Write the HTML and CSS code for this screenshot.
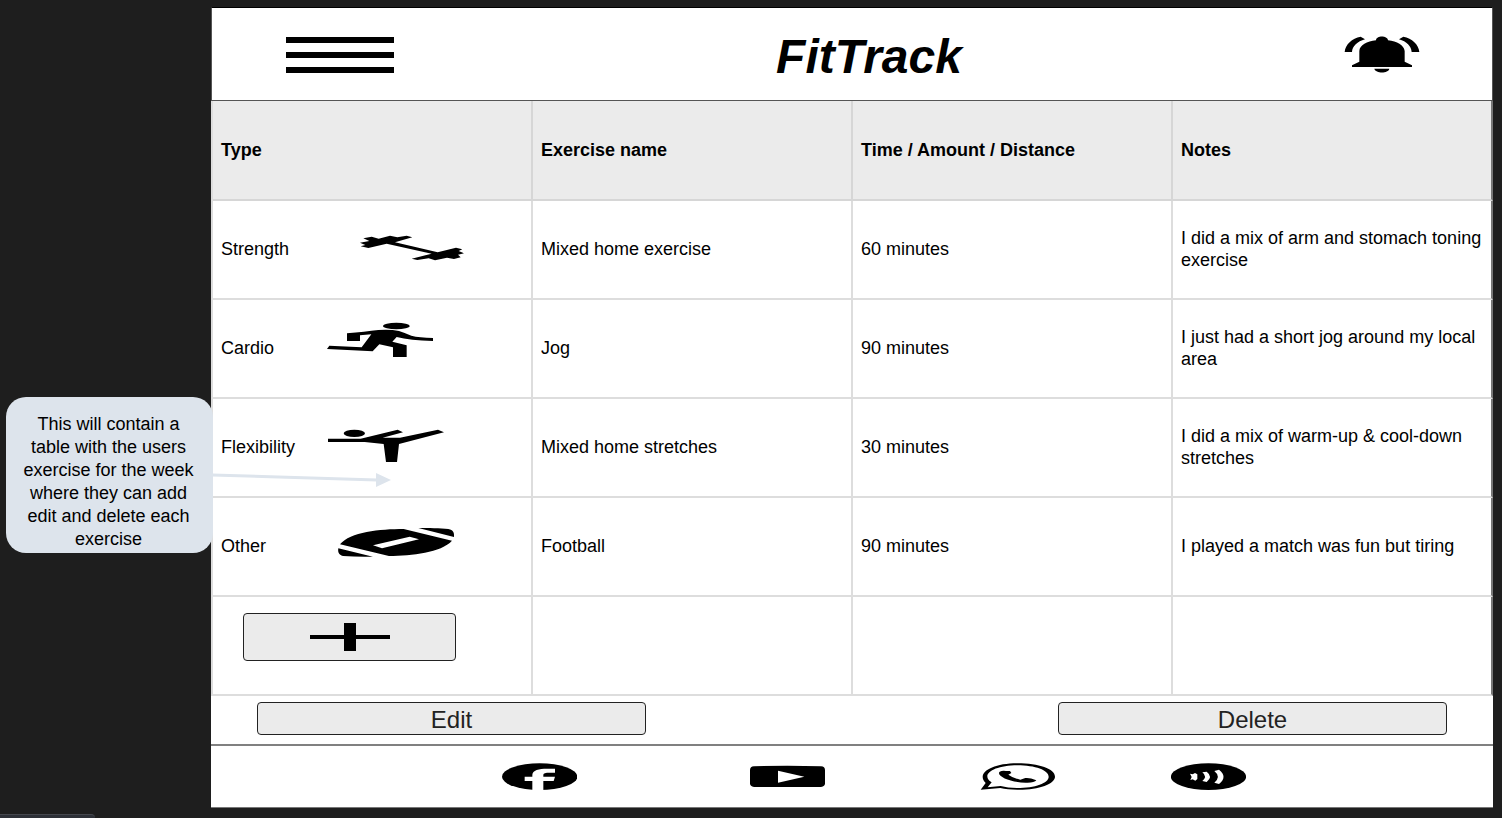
FILE: index.html
```html
<!DOCTYPE html>
<html lang="en">
<head>
<meta charset="utf-8">
<title>FitTrack</title>
<link rel="stylesheet" href="styles.css">
</head>
<body>
<aside class="side">
  <p class="note">This will contain a table with the users exercise for the week where they can add edit and delete each exercise</p>
</aside>
<main class="app">
  <header class="topbar">
    <button class="icon-button" type="button" aria-label="Menu">
      <svg class="menu-icon" viewBox="0 0 108 36"><path d="M0 0h108v6H0zM0 15h108v6H0zM0 30h108v6H0z"/></svg>
    </button>
    <h1 class="brand">FitTrack</h1>
    <button class="icon-button" type="button" aria-label="Notifications">
      <svg class="bell-icon" viewBox="72 108 228 111">
        <path d="M96 201v-5l22-11v-32C119 136 141 124 168 121C169 106 202 106 204 121C231 124 252 136 254 153v32l22 11v5z"/>
        <path d="M163 206h45C205 221 167 221 163 206zM74 156C76 133 96 115 122 110l13 8C112 125 97 138 96 156zM298 156C296 133 276 115 250 110l-13 8C260 125 274 138 275 156z"/>
      </svg>
    </button>
  </header>

  <table class="log">
    <thead>
      <tr><th scope="col">Type</th><th scope="col">Exercise name</th><th scope="col">Time / Amount / Distance</th><th scope="col">Notes</th></tr>
    </thead>
    <tbody>
      <tr>
        <td><div class="type"><span class="type-name">Strength</span>
          <svg class="type-icon" viewBox="45 33 420 168"><path d="M160 85L185 80L206 86L240 77L262 82L290 77L307 82L255 97L383 127L438 113L457 118L446 123L462 130L444 134L452 142L432 147L411 143L375 151L356 145L322 150L305 146L365 131L230 101L175 114L152 109L166 105L150 98L178 93Z"/></svg></div></td>
        <td>Mixed home exercise</td><td>60 minutes</td><td>I did a mix of arm and stomach toning exercise</td>
      </tr>
      <tr>
        <td><div class="type"><span class="type-name">Cardio</span>
          <svg class="type-icon" viewBox="45 45 420 168"><ellipse cx="259" cy="63" rx="40" ry="10"/><path d="M111 85Q165 80 205 75Q240 72 267 78Q285 84 304 92Q328 98 369 99V108Q300 106 260 96L247 110L290 121V156H249V127L208 118L188 139L51 132L58 122L155 127L184 88L150 91V108H111Z"/></svg></div></td>
        <td>Jog</td><td>90 minutes</td><td>I just had a short jog around my local area</td>
      </tr>
      <tr>
        <td><div class="type"><span class="type-name">Flexibility</span>
          <svg class="type-icon" viewBox="45 27 420 168"><ellipse cx="133" cy="70" rx="32" ry="11"/><path d="M54 86H152L263 59L279 67L218 83H270L384 59L402 67L267 102L261 156H228L221 102L164 96H54Z"/></svg></div></td>
        <td>Mixed home stretches</td><td>30 minutes</td><td>I did a mix of warm-up &amp; cool-down stretches</td>
      </tr>
      <tr>
        <td><div class="type"><span class="type-name">Other</span>
          <svg class="type-icon" viewBox="45 24 420 168"><path fill-rule="evenodd" d="M90 103C120 66 210 57 281 57L426 92C393 128 306 137 237 138ZM189 106L216 115L327 88L299 80Z"/><path d="M325 54C355 54 391 54 415 57C430 60 433 68 432 81ZM85 115L189 140C158 141 128 140 99 138C86 135 83 126 85 115Z"/></svg></div></td>
        <td>Football</td><td>90 minutes</td><td>I played a match was fun but tiring</td>
      </tr>
      <tr>
        <td class="add-cell"><button class="button add" type="button" aria-label="Add exercise">
          <svg class="plus-icon" viewBox="0 0 80 28"><path d="M0 12h34V0h12v12h34v4H46v12H34V16H0z"/></svg></button></td>
        <td></td><td></td><td></td>
      </tr>
    </tbody>
  </table>

  <div class="actions">
    <button class="button action" type="button">Edit</button>
    <button class="button action" type="button">Delete</button>
  </div>

  <footer class="social">
    <a class="social-link" href="#" aria-label="Facebook"><svg class="social-icon" viewBox="66 69 225 81">
      <ellipse cx="179" cy="110" rx="113" ry="40"/><path class="cut" d="M157 151V123H134V110H157V105C157 90 177 86 201 86H225V98H205C193 98 190 101 190 106V110H225L221 123H190V151Z"/></svg></a>
    <a class="social-link" href="#" aria-label="YouTube"><svg class="social-icon" viewBox="810 69 225 81">
      <path d="M822 79Q922 76 1023 79Q1035 80 1035 90V130Q1035 140 1023 141H822Q810 140 810 130V90Q810 80 822 79Z"/><path class="cut" d="M894 92L973 110L894 128Z"/></svg></a>
    <a class="social-link" href="#" aria-label="WhatsApp"><svg class="social-icon" viewBox="60 69 225 81">
      <path fill-rule="evenodd" d="M62 149L77 129C48 101 92 70 172 70C237 70 285 87 285 110C285 132 235 150 172 149C152 149 135 147 121 144ZM83 142L122 138C137 142 151 144 171 144C226 144 266 129 266 110C266 91 226 76 172 76C102 76 59 104 95 127Z"/>
      <path d="M119 95Q127 91 138 93H150L154 99L145 104Q160 115 181 119L196 114Q208 112 229 121Q223 129 197 128C158 128 115 112 117 98Z"/></svg></a>
    <a class="social-link" href="#" aria-label="Podcast"><svg class="social-icon" viewBox="633 69 225 81">
      <ellipse cx="745.5" cy="110" rx="113" ry="40"/><path class="cut" d="M690 101L698 103L705 99L712 103V117L706 122L698 118L691 120L695 111ZM727 97L740 95Q760 110 740 126L727 123Q743 110 727 97ZM763 93L777 89Q804 110 777 132L763 128Q784 110 763 93Z"/></svg></a>
  </footer>
</main>
<svg class="pointer" viewBox="0 0 180 16" aria-hidden="true"><path class="pointer-line" d="M0 3L165 8"/><path class="pointer-head" d="M164 1L179 8L164 15Z"/></svg>
<div class="dock"></div>
</body>
</html>
```
FILE: styles.css
```css
* { box-sizing: border-box; }

body {
  position: relative;
  display: flex;
  align-items: flex-start;
  min-height: 100vh;
  margin: 0;
  padding: 7px 9px 10px 0;
  background: #1e1e1e;
  color: #000;
  font-family: "Liberation Sans", Arial, sans-serif;
  font-size: 18px;
  line-height: 22px;
}

svg { display: block; }

.side {
  position: relative;
  z-index: 1;
  flex: 0 0 211px;
  min-width: 0;
  padding: 390px 0 0 6px;
}

.note {
  margin: 0 -2px 0 0;
  padding: 16px 16px 2px 14px;
  border-radius: 20px;
  background: #dde4ec;
  line-height: 23px;
  text-align: center;
}

.app {
  flex: 1;
  min-width: 0;
  background: #fff;
}

.topbar {
  display: flex;
  align-items: center;
  justify-content: space-between;
  height: 94px;
  padding: 1px 72px 0 74px;
  border: 1px solid #555;
  border-top-color: #000;
}

.brand {
  margin: 0;
  padding-top: 4px;
  font-size: 48px;
  line-height: 56px;
  font-style: italic;
  font-weight: bold;
}

.icon-button {
  padding: 0;
  border: 0;
  background: none;
}

.menu-icon { width: 108px; height: 36px; }
.bell-icon { width: 76px; height: 37px; }

.log {
  width: 100%;
  table-layout: fixed;
  border-spacing: 0;
  border-left: 2px solid #ddd;
}

.log tr { height: 99px; }
.log thead tr { height: 100px; }

.log th,
.log td {
  padding: 0 8px;
  border-right: 2px solid #ddd;
  border-bottom: 2px solid #ddd;
  text-align: left;
}

.log td { padding-bottom: 2px; }

.log th { background: #ebebeb; border-color: #d6d6d6; }
.log th:last-child,
.log td:last-child { border-right-color: #777; }

.type {
  display: flex;
  align-items: center;
}

.type-name { flex: 0 0 104px; }
.type-icon { width: 140px; height: 56px; }

.button {
  border: 1px solid #222;
  border-radius: 4px;
  background: #ebebeb;
  color: #222;
  font-family: inherit;
}

.log .add-cell {
  padding: 16px 30px 0;
  vertical-align: top;
}

.add {
  display: flex;
  align-items: center;
  justify-content: center;
  width: 213px;
  height: 48px;
  padding: 0;
}

.plus-icon { width: 80px; height: 28px; }

.actions {
  display: flex;
  justify-content: space-between;
  padding: 6px 46px 9px;
}

.action {
  width: 389px;
  height: 33px;
  padding: 2px 0 0;
  font-size: 24px;
  line-height: 28px;
}

.social {
  display: grid;
  grid-template-columns: 291fr 248fr 230fr 191fr 322fr;
  align-items: center;
  height: 64px;
  border-top: 2px solid #808080;
  border-bottom: 1px solid #777;
}

.social-link { justify-self: start; }
.social-link:first-child { grid-column: 2; }
.social-icon { width: 75px; height: 27px; }
.cut { fill: #fff; }

.pointer {
  position: absolute;
  top: 472px;
  left: 212px;
  width: 180px;
  height: 16px;
}

.pointer-line { stroke: #dde4ec; stroke-width: 3; }
.pointer-head { fill: #dde4ec; }

.dock {
  position: absolute;
  bottom: 0;
  left: 0;
  width: 95px;
  height: 4px;
  border-top: 1px solid #45474d;
  border-top-right-radius: 4px;
  background: #2d3037;
}
```
